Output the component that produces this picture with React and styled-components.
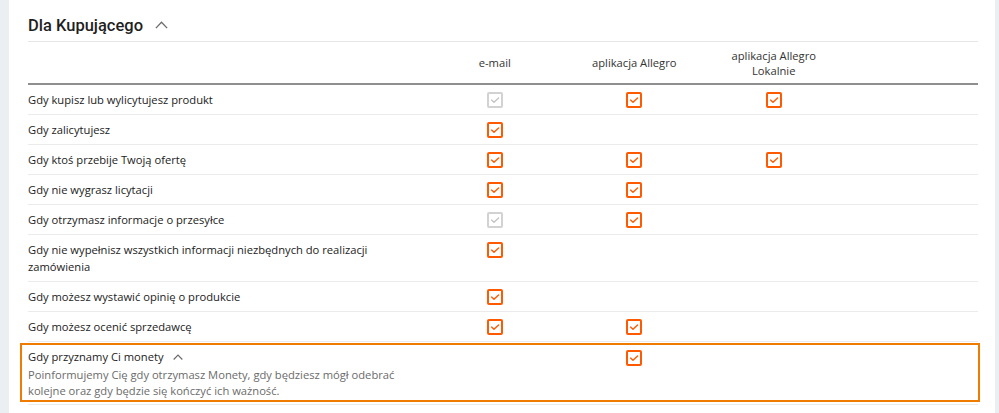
import React from "react";
import styled, { createGlobalStyle } from "styled-components";

const GlobalStyle = createGlobalStyle`
  body {
    margin: 0;
    background-color: #eceff1;
    font-family: "Open Sans", "Liberation Sans", sans-serif;
    color: #222222;
  }
`;

const Page = styled.div`
  padding: 0 4px 0 9px;
  height: 413px;
  overflow: hidden;
`;

const Card = styled.section`
  background-color: #ffffff;
  height: 100%;
  padding: 0 17px 0 19px;
`;

const Heading = styled.div`
  height: 41px;
  display: flex;
  align-items: center;
  gap: 12px;
  border-bottom: 1px solid #e6e6e6;
`;

const Title = styled.h2`
  margin: 0;
  padding-top: 9px;
  font-family: Roboto, "Liberation Sans", sans-serif;
  font-weight: 500;
  font-size: 16.5px;
  color: #1f1f1f;
`;

const Chevron = styled.svg`
  display: block;
  width: ${(p) => p.$size}px;
  height: ${(p) => p.$size * 0.6}px;
  margin-top: ${(p) => (p.$big ? 9 : 0)}px;
`;

const Grid = styled.div`
  display: grid;
  grid-template-columns: 397px repeat(3, 139.5px) 1fr;
`;

const HeadRow = styled(Grid)`
  height: 41px;
  border-bottom: 2px solid #8f8f8f;
  align-items: center;
`;

const ColTitle = styled.div`
  font-size: 11.2px;
  line-height: 15px;
  text-align: center;
  color: #333333;
  padding: 0 10px;
`;

const Row = styled(Grid)`
  border-bottom: 1px solid #ebebeb;
  padding: 6px 0;
  align-items: start;
`;

const Label = styled.div`
  font-size: 11.2px;
  line-height: 17px;
  color: #222222;
`;

const Cell = styled.div`
  display: flex;
  justify-content: center;
  padding-top: ${(p) => p.$top ?? 1}px;
`;

const Highlight = styled.div`
  border-bottom: 1px solid #ebebeb;
  padding: 1px 0 2px;
`;

const Frame = styled(Grid)`
  margin: 0 -2px 0 -8px;
  padding: 3px 0 1px 6px;
  border: 2px solid #ef7b00;
  align-items: start;
`;

const LabelLine = styled.div`
  display: flex;
  align-items: center;
  gap: 9px;
`;

const Description = styled.div`
  margin-top: 2px;
  font-size: 11.2px;
  line-height: 16px;
  color: #6b6b6b;
`;

const Box = styled.span`
  box-sizing: border-box;
  width: 16px;
  height: 16px;
  border: 2px solid ${(p) => (p.$disabled ? "#d2d2d2" : "#ff5a00")};
  border-radius: 2px;
  display: flex;
  align-items: center;
  justify-content: center;
`;

const Check = ({ disabled }) => (
  <Box $disabled={disabled}>
    <svg width="12" height="12" viewBox="0 0 12 12">
      <path
        d="M2.6 6.1 L5 8.3 L9.6 3.9"
        fill="none"
        stroke={disabled ? "#c4c4c4" : "#ff5a00"}
        strokeWidth="1.4"
        strokeLinecap="round"
        strokeLinejoin="round"
      />
    </svg>
  </Box>
);

const Up = ({ size, big }) => (
  <Chevron $size={size} $big={big} viewBox="0 0 12 7.2">
    <path
      d="M0.8 6.6 L6 1.2 L11.2 6.6"
      fill="none"
      stroke="#6b6b6b"
      strokeWidth={big ? 1.2 : 1.4}
    />
  </Chevron>
);

const rows = [
  ["Gdy kupisz lub wylicytujesz produkt", ["off", "on", "on"]],
  ["Gdy zalicytujesz", ["on", null, null]],
  ["Gdy ktoś przebije Twoją ofertę", ["on", "on", "on"]],
  ["Gdy nie wygrasz licytacji", ["on", "on", null]],
  ["Gdy otrzymasz informacje o przesyłce", ["off", "on", null]],
  [
    "Gdy nie wypełnisz wszystkich informacji niezbędnych do realizacji zamówienia",
    ["on", null, null],
  ],
  ["Gdy możesz wystawić opinię o produkcie", ["on", null, null]],
  ["Gdy możesz ocenić sprzedawcę", ["on", "on", null]],
];

const channels = ["e-mail", "aplikacja Allegro", "aplikacja Allegro Lokalnie"];

const Cells = ({ states, top }) =>
  states.map((s, i) => (
    <Cell key={i} $top={top}>
      {s && <Check disabled={s === "off"} />}
    </Cell>
  ));

export default function App() {
  return (
    <>
      <GlobalStyle />
      <Page>
        <Card>
          <Heading>
            <Title>Dla Kupującego</Title>
            <Up size={13} big />
          </Heading>
          <HeadRow>
            <div />
            {channels.map((c) => (
              <ColTitle key={c}>{c}</ColTitle>
            ))}
          </HeadRow>
          {rows.map(([label, states]) => (
            <Row key={label}>
              <Label>{label}</Label>
              <Cells states={states} />
            </Row>
          ))}
          <Highlight>
            <Frame>
              <div>
                <Label as={LabelLine}>
                  Gdy przyznamy Ci monety
                  <Up size={10} />
                </Label>
                <Description>
                  Poinformujemy Cię gdy otrzymasz Monety, gdy będziesz mógł
                  odebrać kolejne oraz gdy będzie się kończyć ich ważność.
                </Description>
              </div>
              <Cells states={[null, "on", null]} top={2} />
            </Frame>
          </Highlight>
        </Card>
      </Page>
    </>
  );
}
